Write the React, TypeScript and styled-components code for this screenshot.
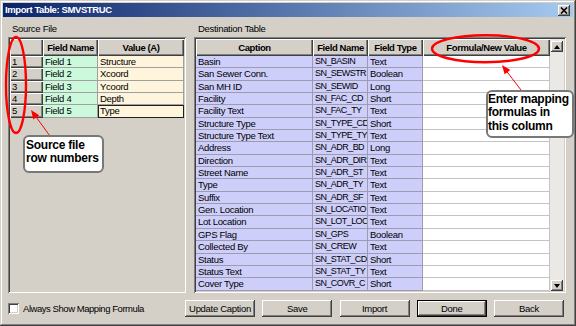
import styled, { createGlobalStyle, css } from 'styled-components';

const FONT = `'Liberation Sans', Arial, sans-serif`;

const GlobalStyle = createGlobalStyle`
  html, body { margin: 0; padding: 0; }
  body { background: #ffffff; font-family: ${FONT}; }
`;

const sourceRows = [
  { n: '1', field: 'Field 1', value: 'Structure' },
  { n: '2', field: 'Field 2', value: 'Xcoord' },
  { n: '3', field: 'Field 3', value: 'Ycoord' },
  { n: '4', field: 'Field 4', value: 'Depth' },
  { n: '5', field: 'Field 5', value: 'Type' },
];

const destRows: [string, string, string][] = [
  ['Basin', 'SN_BASIN', 'Text'],
  ['San Sewer Conn.', 'SN_SEWSTR', 'Boolean'],
  ['San MH ID', 'SN_SEWID', 'Long'],
  ['Facility', 'SN_FAC_CD', 'Short'],
  ['Facility Text', 'SN_FAC_TY', 'Text'],
  ['Structure Type', 'SN_TYPE_CD', 'Short'],
  ['Structure Type Text', 'SN_TYPE_TY', 'Text'],
  ['Address', 'SN_ADR_BD', 'Long'],
  ['Direction', 'SN_ADR_DIR', 'Text'],
  ['Street Name', 'SN_ADR_ST', 'Text'],
  ['Type', 'SN_ADR_TY', 'Text'],
  ['Suffix', 'SN_ADR_SF', 'Text'],
  ['Gen. Location', 'SN_LOCATIO', 'Text'],
  ['Lot Location', 'SN_LOT_LOC', 'Text'],
  ['GPS Flag', 'SN_GPS', 'Boolean'],
  ['Collected By', 'SN_CREW', 'Text'],
  ['Status', 'SN_STAT_CD', 'Short'],
  ['Status Text', 'SN_STAT_TY', 'Text'],
  ['Cover Type', 'SN_COVR_C', 'Short'],
];

const buttons = ['Update Caption', 'Save', 'Import', 'Done', 'Back'];

// arrowhead triangle from tail to tip
const headPoints = (tx: number, ty: number, hx: number, hy: number) => {
  const dx = hx - tx;
  const dy = hy - ty;
  const len = Math.sqrt(dx * dx + dy * dy);
  const ux = dx / len;
  const uy = dy / len;
  const bx = hx - ux * 9;
  const by = hy - uy * 9;
  const px = -uy * 3.6;
  const py = ux * 3.6;
  return `${hx},${hy} ${bx + px},${by + py} ${bx - px},${by - py}`;
};

const App = () => {
  return (
    <>
      <GlobalStyle />
      <Window>
        <TitleBar>
          <Title>Import Table: SMVSTRUC</Title>
          <CloseButton>
            <svg width="8" height="7" viewBox="0 0 8 7">
              <path d="M1 0.5 L7 6.5 M7 0.5 L1 6.5" stroke="#000" strokeWidth="1.6" />
            </svg>
          </CloseButton>
        </TitleBar>

        <Main>
          <Column $width={178}>
            <Label>Source File</Label>
            <Frame>
              <Grid $cols="33px 55px 86px" $rows={sourceRows.length}>
                <HeadCell />
                <HeadCell>Field Name</HeadCell>
                <HeadCell>Value (A)</HeadCell>
                {sourceRows.map((r) => (
                  <Row key={r.n}>
                    <RowHead>{r.n}</RowHead>
                    <Cell $bg="#ccf8dc" $line="#a0a0a0">{r.field}</Cell>
                    <Cell $bg="#fff4dc" $line="#a0a0a0" $selected={r.n === '5'}>
                      {r.value}
                    </Cell>
                  </Row>
                ))}
              </Grid>
            </Frame>
          </Column>

          <Column $width={372}>
            <Label>Destination Table</Label>
            <Frame>
              <Grid $cols="117px 55px 55px 127px" $rows={destRows.length} $grow>
                <HeadCell>Caption</HeadCell>
                <HeadCell>Field Name</HeadCell>
                <HeadCell>Field Type</HeadCell>
                <HeadCell>Formula/New Value</HeadCell>
                {destRows.map(([caption, field, type]) => (
                  <Row key={field}>
                    <Cell $bg="#cecefa">{caption}</Cell>
                    <Cell $bg="#cecefa" $tight>
                      {field}
                    </Cell>
                    <Cell $bg="#cecefa">{type}</Cell>
                    <Cell $bg="#ffffff" $line="#c4c4c4" />
                  </Row>
                ))}
              </Grid>
              <ScrollBar>
                <ScrollButton>
                  <Tri $up />
                </ScrollButton>
                <ScrollButton>
                  <Tri />
                </ScrollButton>
              </ScrollBar>
            </Frame>
          </Column>
        </Main>

        <Footer>
          <CheckArea>
            <CheckBox />
            <CheckLabel>Always Show Mapping Formula</CheckLabel>
          </CheckArea>
          <ButtonRow>
            {buttons.map((b) => (
              <Button key={b} $default={b === 'Done'}>
                {b}
              </Button>
            ))}
          </ButtonRow>
        </Footer>

        <Overlay width="576" height="326" viewBox="0 0 576 326">
          <ellipse cx="16" cy="85" rx="10" ry="48" fill="none" stroke="#ff0000" strokeWidth="2.4" />
          <ellipse cx="485.5" cy="48.7" rx="53.5" ry="13.5" fill="none" stroke="#ff0000" strokeWidth="2.4" />
          <line x1="50" y1="136" x2="35" y2="115.5" stroke="#ff0000" strokeWidth="1" />
          <polygon points={headPoints(50, 136, 31, 110)} fill="#ff0000" />
          <line x1="521" y1="90" x2="506" y2="70.5" stroke="#ff0000" strokeWidth="1" />
          <polygon points={headPoints(521, 90, 502, 65)} fill="#ff0000" />
        </Overlay>
        <Callout $x={23} $y={135} $w={81} $h={38} $pad="1.5px 0 0 1px">
          Source file
          <br />
          row numbers
        </Callout>
        <Callout $x={486} $y={90} $w={88} $h={48} $pad="0.5px 0 0 0" $lh={13.5}>
          Enter mapping
          <br />
          formulas in
          <br />
          this column
        </Callout>
      </Window>
    </>
  );
};

const Window = styled.div`
  position: relative;
  width: 576px;
  height: 326px;
  box-sizing: border-box;
  padding: 3px;
  background: #d4d0c8;
  box-shadow: inset -1px -1px 0 #404040, inset 1px 1px 0 #d4d0c8, inset -2px -2px 0 #808080,
    inset 2px 2px 0 #ffffff;
  display: flex;
  flex-direction: column;
  overflow: hidden;
  font-family: ${FONT};
  color: #000;
`;

const TitleBar = styled.div`
  height: 14px;
  display: flex;
  align-items: center;
  justify-content: space-between;
  padding: 0 3px 0 2px;
  background: linear-gradient(to right, #0a246a, #a6caf0);
`;

const Title = styled.span`
  color: #ffffff;
  font-weight: bold;
  font-size: 9.5px;
  letter-spacing: -0.4px;
  line-height: 14px;
`;

const CloseButton = styled.div`
  width: 12px;
  height: 11px;
  background: #d4d0c8;
  box-shadow: inset -1px -1px 0 #404040, inset 1px 1px 0 #ffffff, inset -2px -2px 0 #808080;
  display: flex;
  align-items: center;
  justify-content: center;
`;

const Main = styled.div`
  display: flex;
  gap: 8px;
  padding: 0 7px 0 5px;
`;

const Column = styled.div<{ $width: number }>`
  width: ${(p) => p.$width}px;
  display: flex;
  flex-direction: column;
`;

const Label = styled.div`
  height: 20px;
  box-sizing: border-box;
  padding: 0 0 2px 4px;
  display: flex;
  align-items: flex-end;
  font-size: 9.5px;
  letter-spacing: -0.3px;
  line-height: 12px;
`;

const Frame = styled.div`
  height: 256px;
  box-sizing: border-box;
  padding: 2px;
  display: flex;
  box-shadow: inset 1px 1px 0 #808080, inset -1px -1px 0 #ffffff, inset 2px 2px 0 #404040,
    inset -2px -2px 0 #d4d0c8;
`;

const Grid = styled.div<{ $cols: string; $rows: number; $grow?: boolean }>`
  display: grid;
  grid-template-columns: ${(p) => p.$cols};
  grid-template-rows: 17px repeat(${(p) => p.$rows}, 12.35px);
  align-content: start;
  ${(p) => p.$grow && 'flex: 1;'}
`;

const Row = styled.div`
  display: contents;
`;

const HeadCell = styled.div`
  background: #d4d0c8;
  box-shadow: inset 1px 1px 0 #ffffff, inset -1px -1px 0 #404040, inset -2px -2px 0 #808080;
  font-weight: bold;
  font-size: 9.5px;
  letter-spacing: -0.4px;
  display: flex;
  align-items: center;
  justify-content: center;
  white-space: nowrap;
  overflow: hidden;
`;

const RowHead = styled.div`
  background: #d4d0c8;
  box-shadow: inset 1px 1px 0 #ffffff, inset -1px -1px 0 #404040, inset -2px -2px 0 #808080;
  font-size: 9.5px;
  line-height: 12px;
  padding-left: 2px;
`;

const Cell = styled.div<{ $bg: string; $line?: string; $selected?: boolean; $tight?: boolean }>`
  box-sizing: border-box;
  background: ${(p) => p.$bg};
  border-right: 1px solid ${(p) => p.$line ?? '#9c9cae'};
  border-bottom: 1px solid ${(p) => p.$line ?? '#9c9cae'};
  font-size: ${(p) => (p.$tight ? '9px' : '9.5px')};
  letter-spacing: ${(p) => (p.$tight ? '-0.55px' : '-0.3px')};
  line-height: 11.5px;
  padding-left: 2px;
  white-space: nowrap;
  overflow: hidden;
  ${(p) =>
    p.$selected &&
    css`
      outline: 1px solid #202020;
      outline-offset: -1px;
    `}
`;

const ScrollBar = styled.div`
  width: 14px;
  box-sizing: border-box;
  padding: 2px 1px 0 1px;
  background: #ebe9e5;
  display: flex;
  flex-direction: column;
  justify-content: space-between;
`;

const ScrollButton = styled.div`
  width: 12px;
  height: 11px;
  background: #d4d0c8;
  box-shadow: inset -1px -1px 0 #404040, inset 1px 1px 0 #ffffff, inset -2px -2px 0 #808080;
  display: flex;
  align-items: center;
  justify-content: center;
`;

const Tri = styled.div<{ $up?: boolean }>`
  width: 0;
  height: 0;
  border-left: 3.5px solid transparent;
  border-right: 3.5px solid transparent;
  ${(p) => (p.$up ? 'border-bottom: 4px solid #000;' : 'border-top: 4px solid #000;')}
`;

const Footer = styled.div`
  height: 30px;
  display: flex;
  align-items: center;
  padding-left: 5px;
`;

const CheckArea = styled.div`
  width: 177px;
  display: flex;
  align-items: center;
  gap: 4px;
`;

const CheckBox = styled.div`
  width: 11px;
  height: 11px;
  background: #ffffff;
  box-shadow: inset 1px 1px 0 #808080, inset -1px -1px 0 #ffffff, inset 2px 2px 0 #404040,
    inset -2px -2px 0 #d4d0c8;
`;

const CheckLabel = styled.span`
  font-size: 9.5px;
  letter-spacing: -0.45px;
`;

const ButtonRow = styled.div`
  display: flex;
  gap: 7.25px;
`;

const Button = styled.button<{ $default?: boolean }>`
  width: 70px;
  height: 17px;
  padding: 0;
  margin: 0;
  border: none;
  background: #d4d0c8;
  font-family: ${FONT};
  font-size: 9.5px;
  letter-spacing: -0.3px;
  color: #000;
  box-shadow: inset -1px -1px 0 #404040, inset 1px 1px 0 #ffffff, inset -2px -2px 0 #808080;
  ${(p) =>
    p.$default &&
    css`
      box-shadow: inset 0 0 0 1px #000000, inset -2px -2px 0 #404040, inset 2px 2px 0 #ffffff,
        inset -3px -3px 0 #808080;
    `}
`;

const Overlay = styled.svg`
  position: absolute;
  left: 0;
  top: 0;
  pointer-events: none;
  z-index: 2;
`;

const Callout = styled.div<{ $x: number; $y: number; $w: number; $h: number; $pad: string; $lh?: number }>`
  position: absolute;
  left: ${(p) => p.$x}px;
  top: ${(p) => p.$y}px;
  width: ${(p) => p.$w}px;
  height: ${(p) => p.$h}px;
  box-sizing: border-box;
  padding: ${(p) => p.$pad};
  border: 2px solid #787878;
  border-radius: 6px;
  background: #ffffff;
  font-weight: bold;
  font-size: 12px;
  letter-spacing: -0.25px;
  line-height: ${(p) => p.$lh ?? 13}px;
  white-space: nowrap;
  z-index: 3;
`;

export default App;
